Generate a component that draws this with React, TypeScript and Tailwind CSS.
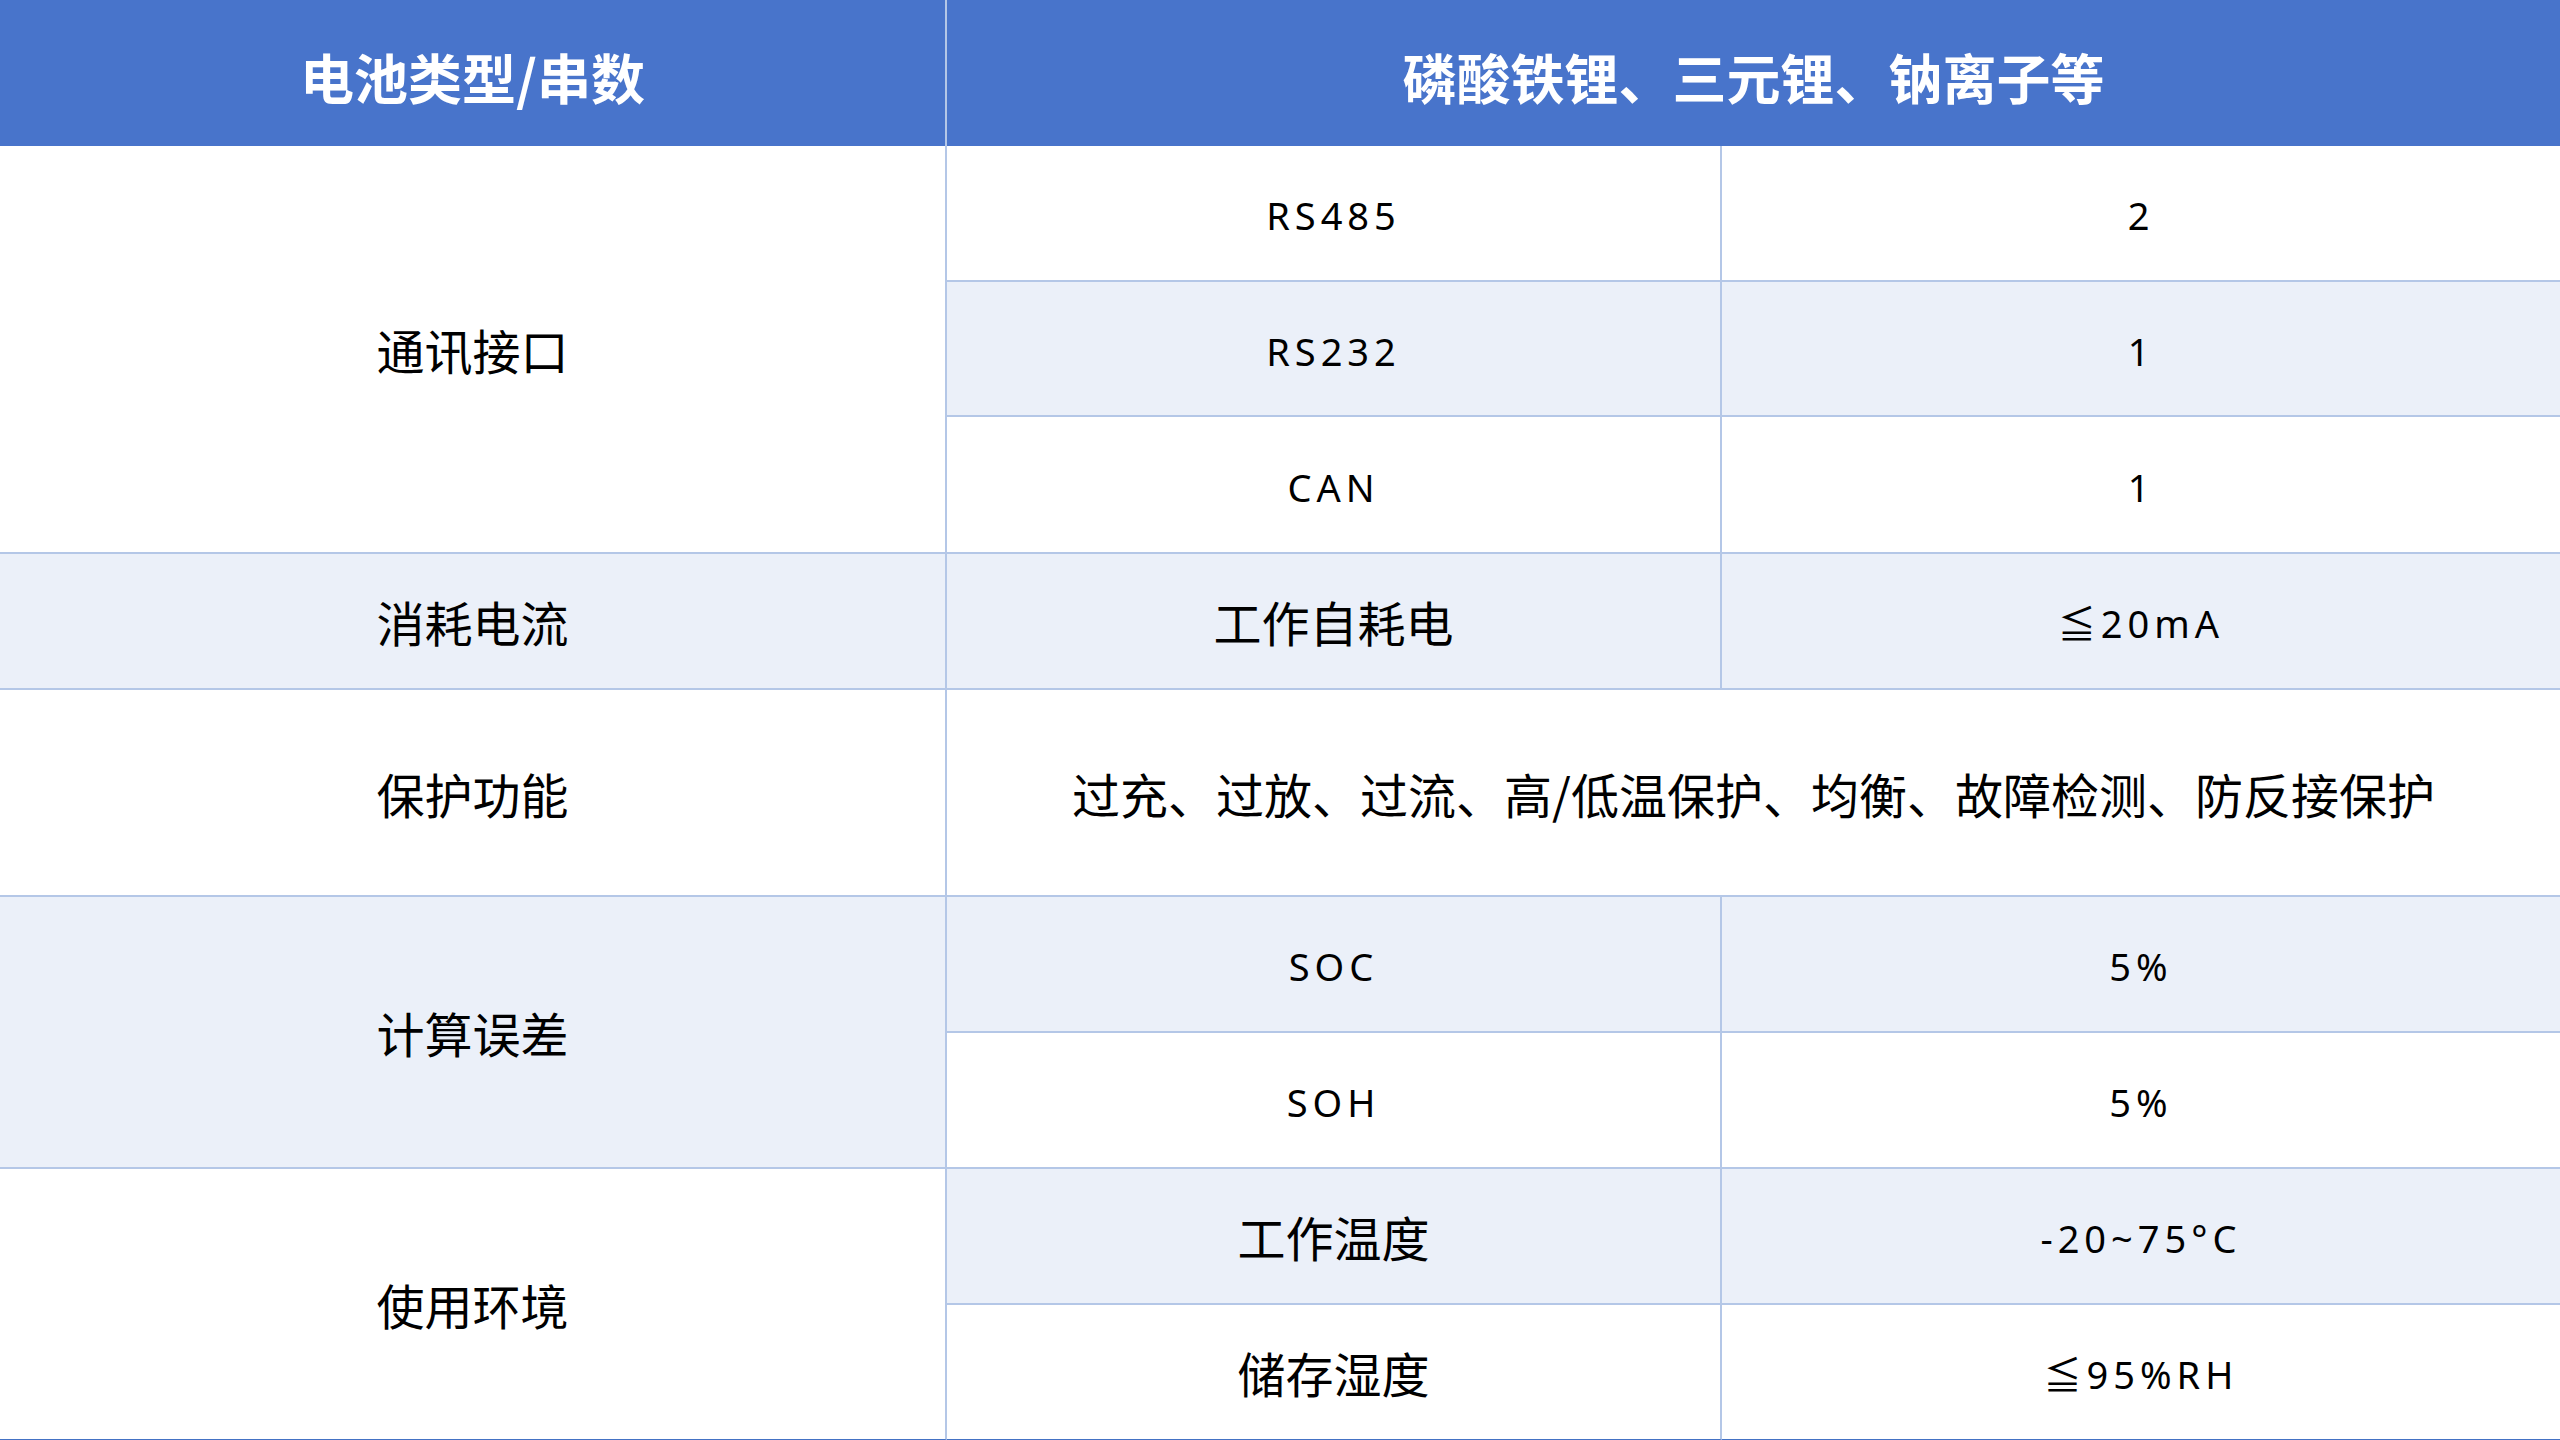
const cjk = "font-['Noto_Sans_CJK_SC',sans-serif] text-[48px] text-black";
const latin = "font-['Noto_Sans','Noto_Sans_CJK_SC',sans-serif] text-[38px] tracking-[5px] text-black pt-[5px]";

type Cell = {
  text: string;
  latin?: boolean;
  shade?: boolean;
  span?: string;
  last?: boolean;
  right?: boolean;
};

const Td = ({ text, latin: isLatin, shade, span, last, right }: Cell) => (
  <div
    className={`flex items-center justify-center ${span ?? ""} ${
      shade ? "bg-[#ebf0f9]" : "bg-white"
    } ${last ? "border-b border-[#4472c4]" : "border-b-2 border-[#b4c7e7]"} ${
      right ? "border-r-2 border-r-[#b4c7e7]" : ""
    }`}
  >
    <span className={isLatin ? latin : cjk}>{text}</span>
  </div>
);

export default function App() {
  return (
    <div className="min-h-screen w-full bg-white">
      <div className="grid h-[1440px] w-[2560px] grid-cols-[947px_775px_1fr] grid-rows-[146px_136px_135px_137px_136px_207px_136px_136px_136px_135px]">
        {/* header */}
        <div className="flex items-center justify-center border-r-2 border-[#b4c7e7] bg-[#4874cb] pt-[6px]">
          <span className="font-['Noto_Sans_CJK_SC',sans-serif] text-[54px] font-bold text-white">
            电池类型/串数
          </span>
        </div>
        <div className="col-span-2 flex items-center justify-center bg-[#4874cb] pt-[6px]">
          <span className="font-['Noto_Sans_CJK_SC',sans-serif] text-[54px] font-bold text-white">
            磷酸铁锂、三元锂、钠离子等
          </span>
        </div>

        {/* 通讯接口 */}
        <Td text="通讯接口" span="row-span-3" right />
        <Td text="RS485" latin right />
        <Td text="2" latin />
        <Td text="RS232" latin shade right />
        <Td text="1" latin shade />
        <Td text="CAN" latin right />
        <Td text="1" latin />

        {/* 消耗电流 */}
        <Td text="消耗电流" shade right />
        <Td text="工作自耗电" shade right />
        <Td text="≦20mA" latin shade />

        {/* 保护功能 */}
        <Td text="保护功能" right />
        <Td
          text="过充、过放、过流、高/低温保护、均衡、故障检测、防反接保护"
          span="col-span-2"
        />

        {/* 计算误差 */}
        <Td text="计算误差" span="row-span-2" shade right />
        <Td text="SOC" latin shade right />
        <Td text="5%" latin shade />
        <Td text="SOH" latin right />
        <Td text="5%" latin />

        {/* 使用环境 */}
        <Td text="使用环境" span="row-span-2" right last />
        <Td text="工作温度" shade right />
        <Td text="-20~75°C" latin shade />
        <Td text="储存湿度" right last />
        <Td text="≦95%RH" latin last />
      </div>
    </div>
  );
}
